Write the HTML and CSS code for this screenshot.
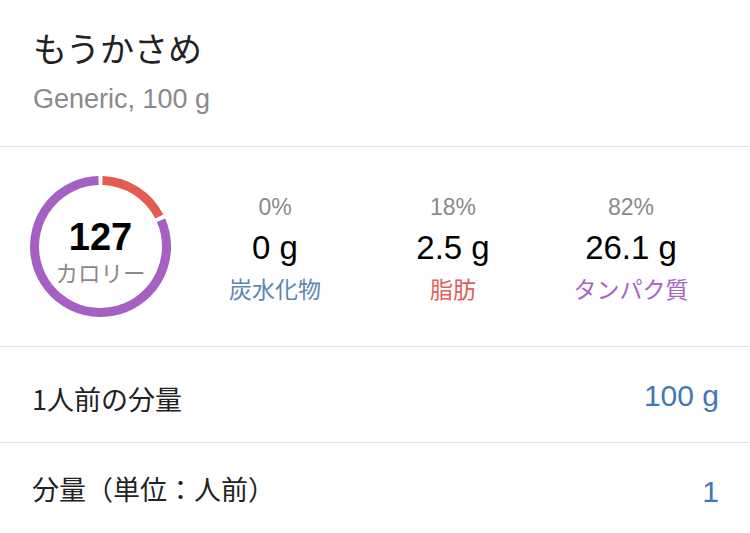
FILE: index.html
```html
<!DOCTYPE html>
<html lang="ja">
<head>
<meta charset="utf-8">
<title>もうかさめ</title>
<link rel="stylesheet" href="styles.css">
</head>
<body>
<div class="page">
  <header class="header">
    <div class="title">もうかさめ</div>
    <div class="subtitle">Generic, 100 g</div>
  </header>

  <section class="macros">
    <div class="ring">
      <svg class="ring-svg" width="141" height="141" viewBox="0 0 141 141">
        <path d="M72.46 4.53 A66 66 0 0 1 129.31 40.54" fill="none" stroke="#e35b52" stroke-width="9"/>
        <path d="M131.03 44.18 A66 66 0 1 1 68.54 4.53" fill="none" stroke="#a65fc2" stroke-width="9"/>
      </svg>
      <div class="ring-text">
        <div class="kcal">127</div>
        <div class="kcal-label">カロリー</div>
      </div>
    </div>
    <div class="macro">
      <div class="pct">0%</div>
      <div class="amount">0 g</div>
      <div class="mlabel carbs">炭水化物</div>
    </div>
    <div class="macro">
      <div class="pct">18%</div>
      <div class="amount">2.5 g</div>
      <div class="mlabel fat">脂肪</div>
    </div>
    <div class="macro">
      <div class="pct">82%</div>
      <div class="amount">26.1 g</div>
      <div class="mlabel protein">タンパク質</div>
    </div>
  </section>

  <div class="row">
    <div class="row-label">1人前の分量</div>
    <div class="row-value">100 g</div>
  </div>
  <div class="row">
    <div class="row-label row-label-up">分量（単位：人前）</div>
    <div class="row-value">1</div>
  </div>
</div>
</body>
</html>
```

FILE: styles.css
```css
html, body {
  margin: 0;
  padding: 0;
  background: #ffffff;
}

.page {
  width: 750px;
  height: 533px;
  overflow: hidden;
  font-family: "Liberation Sans", "Noto Sans CJK JP", sans-serif;
  color: #1e1e1e;
}

.header {
  height: 147px;
  box-sizing: border-box;
  padding: 27px 33px 0 33px;
  border-bottom: 1px solid #e2e2e2;
}

.title {
  font-family: "Noto Sans CJK JP", sans-serif;
  font-size: 34px;
  line-height: 42px;
  color: #222222;
}

.subtitle {
  margin-top: 14px;
  font-size: 27px;
  line-height: 32px;
  color: #8a8a8a;
}

.macros {
  height: 200px;
  box-sizing: border-box;
  border-bottom: 1px solid #e2e2e2;
  display: flex;
  align-items: flex-start;
  padding: 0 30px;
}

.ring {
  width: 141px;
  height: 141px;
  margin-top: 29px;
  margin-right: 15px;
  display: grid;
  flex: none;
}

.ring-svg,
.ring-text {
  grid-area: 1 / 1;
}

.ring-text {
  display: flex;
  flex-direction: column;
  align-items: center;
  justify-content: center;
  padding-top: 8px;
}

.kcal {
  font-size: 38px;
  line-height: 38px;
  font-weight: bold;
  color: #000000;
}

.kcal-label {
  margin-top: 4px;
  font-family: "Noto Sans CJK JP", sans-serif;
  font-size: 22.5px;
  line-height: 24px;
  color: #8a8a8a;
}

.macro {
  flex: 1;
  margin-top: 47px;
  display: flex;
  flex-direction: column;
  align-items: center;
}

.pct {
  font-size: 23px;
  line-height: 26px;
  color: #8a8a8a;
}

.amount {
  margin-top: 9px;
  font-size: 33px;
  line-height: 38px;
  color: #000000;
}

.mlabel {
  margin-top: 6px;
  font-family: "Noto Sans CJK JP", sans-serif;
  font-size: 23px;
  line-height: 30px;
}

.carbs { color: #5a88b5; }
.fat { color: #e0605a; }
.protein { color: #a864c2; }

.row {
  height: 96px;
  box-sizing: border-box;
  border-bottom: 1px solid #e2e2e2;
  display: flex;
  align-items: center;
  justify-content: space-between;
  padding: 0 31px 0 32px;
}

.row-label {
  font-family: "Noto Sans CJK JP", sans-serif;
  font-size: 27px;
  line-height: 32px;
  color: #222222;
  padding-top: 8px;
}

.row-label-up {
  padding-top: 0;
  margin-bottom: 4px;
}

.row-value {
  font-size: 30px;
  line-height: 34px;
  color: #3f7ab8;
  padding-top: 2px;
}
```
